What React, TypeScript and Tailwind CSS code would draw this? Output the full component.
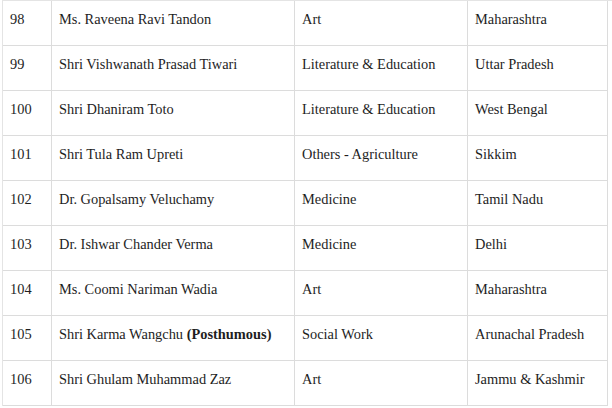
import React from "react";

interface Row {
  no: number;
  name: React.ReactNode;
  field: string;
  state: string;
}

const rows: Row[] = [
  { no: 98, name: "Ms. Raveena Ravi Tandon", field: "Art", state: "Maharashtra" },
  { no: 99, name: "Shri Vishwanath Prasad Tiwari", field: "Literature & Education", state: "Uttar Pradesh" },
  { no: 100, name: "Shri Dhaniram Toto", field: "Literature & Education", state: "West Bengal" },
  { no: 101, name: "Shri Tula Ram Upreti", field: "Others - Agriculture", state: "Sikkim" },
  { no: 102, name: "Dr. Gopalsamy Veluchamy", field: "Medicine", state: "Tamil Nadu" },
  { no: 103, name: "Dr. Ishwar Chander Verma", field: "Medicine", state: "Delhi" },
  { no: 104, name: "Ms. Coomi Nariman Wadia", field: "Art", state: "Maharashtra" },
  {
    no: 105,
    name: (
      <>
        Shri Karma Wangchu <b>(Posthumous)</b>
      </>
    ),
    field: "Social Work",
    state: "Arunachal Pradesh",
  },
  { no: 106, name: "Shri Ghulam Muhammad Zaz", field: "Art", state: "Jammu & Kashmir" },
];

const cell =
  "h-[45px] border-r border-b border-[#dcdcdc] pl-[7px] pt-[10px] leading-[17px] whitespace-nowrap overflow-hidden";

const App = () => {
  return (
    <div className="w-[612px] h-[408px] bg-white overflow-hidden">
      <div className="ml-[2px] grid grid-cols-[49px_243px_173px_140px] border-l border-t border-[#e4e4e4] font-['Liberation_Serif','Times_New_Roman',serif] text-[14.4px] text-[#1e1e1e]">
        {rows.map((r) => (
          <React.Fragment key={r.no}>
            <div className={cell}>{r.no}</div>
            <div className={cell}>{r.name}</div>
            <div className={cell}>{r.field}</div>
            <div className={cell}>{r.state}</div>
          </React.Fragment>
        ))}
      </div>
    </div>
  );
};

export default App;
